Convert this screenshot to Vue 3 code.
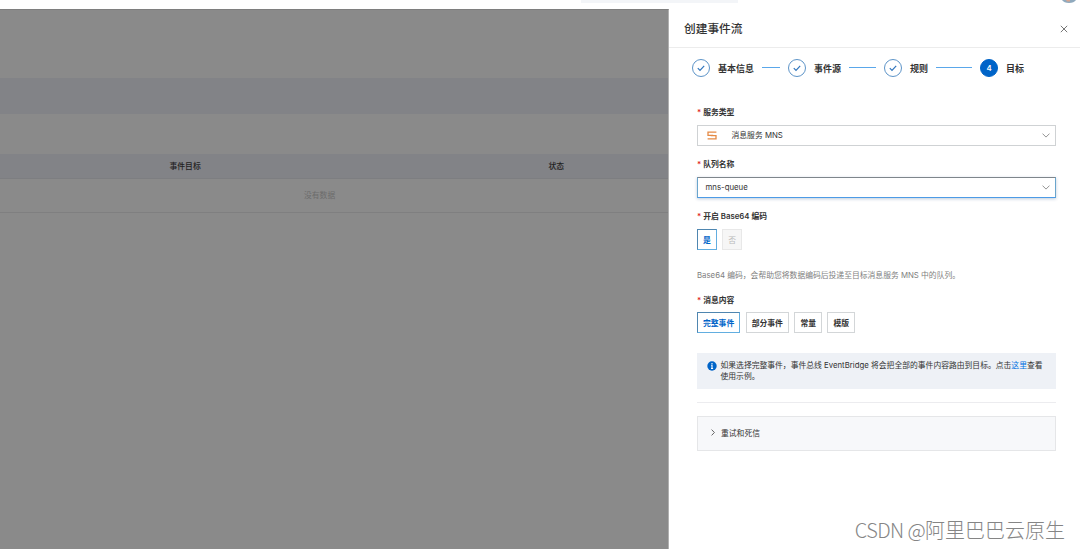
<template>
  <div class="page">
    <header class="topbar">
      <div class="search"></div>
      <svg class="avatar" viewBox="0 0 14 3">
        <path d="M0 0h14q-2 3-7 3T0 0z" fill="#8fa9bd" />
        <path d="M4 0h4v1.5H5z" fill="#d8a58f" />
      </svg>
    </header>

    <div class="content">
      <main class="list">
        <div class="notice"></div>
        <div class="row row-head">
          <span class="cell-source"></span>
          <span class="cell-target">事件目标</span>
          <span class="cell-status">状态</span>
        </div>
        <div class="row row-empty">没有数据</div>
      </main>

      <aside class="drawer">
        <div class="drawer-head">
          <h2>创建事件流</h2>
          <svg class="close" viewBox="0 0 8 8">
            <path d="M0.8 0.8l6.4 6.4M7.2 0.8l-6.4 6.4" />
          </svg>
        </div>

        <div class="steps">
          <template v-for="(step, i) in steps" :key="step.name">
            <div class="step">
              <span class="circle" :class="{ active: i === current }">
                <svg v-if="i < current" viewBox="0 0 8 8">
                  <path d="M0.8 4.1l2.2 2.3 4.2-4.5" />
                </svg>
                <template v-else>{{ i + 1 }}</template>
              </span>
              <span class="step-name">{{ step.name }}</span>
            </div>
            <i v-if="i < steps.length - 1" class="line" :style="{ width: step.line + 'px' }"></i>
          </template>
        </div>

        <form class="form" @submit.prevent>
          <label class="label">服务类型</label>
          <div class="select">
            <svg class="mns" viewBox="0 0 10 9">
              <path d="M9.4 1.1H1v3.2h5.2M.6 7.9H9V4.7H3.8" />
            </svg>
            <span class="value">消息服务 MNS</span>
            <svg class="arrow" viewBox="0 0 8 5"><path d="M.5.6L4 4.1 7.5.6" /></svg>
          </div>

          <label class="label">队列名称</label>
          <div class="select focused">
            <span class="value">mns-queue</span>
            <svg class="arrow" viewBox="0 0 8 5"><path d="M.5.6L4 4.1 7.5.6" /></svg>
          </div>

          <label class="label">开启 Base64 编码</label>
          <div class="options">
            <button type="button" class="option selected">是</button>
            <button type="button" class="option" disabled>否</button>
          </div>
          <p class="help">Base64 编码，会帮助您将数据编码后投递至目标消息服务 MNS 中的队列。</p>

          <label class="label">消息内容</label>
          <div class="options">
            <button
              v-for="type in contentTypes"
              :key="type"
              type="button"
              class="option"
              :class="{ selected: type === contentType }"
              @click="contentType = type"
            >{{ type }}</button>
          </div>

          <div class="alert">
            <svg class="info" viewBox="0 0 10 10">
              <circle cx="5" cy="5" r="4.7" fill="#0064c8" />
              <path d="M5 2v1.3M4.2 4.3H5v3M4 7.5h2.1" stroke="#fff" stroke-width="1.1" fill="none" />
            </svg>
            <p>如果选择完整事件，事件总线 EventBridge 将会把全部的事件内容路由到目标。点击<a>这里</a>查看<br />使用示例。</p>
          </div>

          <div class="divider"></div>

          <div class="collapse">
            <svg viewBox="0 0 4 7"><path d="M.6.6l2.8 2.9L.6 6.4" /></svg>
            <span>重试和死信</span>
          </div>
        </form>
      </aside>
    </div>

    <div class="watermark"><span>CSDN @</span>阿里巴巴云原生</div>
  </div>
</template>

<script setup>
import { ref } from "vue";

const steps = [
  { name: "基本信息", line: 18 },
  { name: "事件源", line: 27 },
  { name: "规则", line: 36 },
  { name: "目标" }
];
const current = ref(3);

const contentTypes = ["完整事件", "部分事件", "常量", "模版"];
const contentType = ref("完整事件");
</script>

<style>
body {
  margin: 0;
  overflow: hidden;
}
</style>

<style scoped>
* {
  box-sizing: border-box;
}

svg {
  display: block;
  flex: none;
  fill: none;
}

.page {
  position: relative;
  display: flex;
  flex-direction: column;
  width: 1080px;
  height: 549px;
  background: #fff;
  color: #333;
  font-family: Inter, "Noto Sans CJK SC", sans-serif;
  font-size: 7.8px;
}

.topbar {
  display: flex;
  justify-content: space-between;
  height: 9px;
  padding: 0 4px 0 581px;
}

.search {
  width: 157px;
  height: 3px;
  background: #f3f5f8;
}

.avatar {
  width: 14px;
  height: 3px;
}

.content {
  flex: 1;
  display: flex;
}

.list {
  width: 669px;
  padding-top: 68px;
  background: #8a8a8a;
  border-top: 1px solid #7e7e7e;
  border-right: 1px solid #b0b0b0;
}

.notice {
  height: 36px;
  margin-bottom: 40px;
  background: #828387;
}

.row {
  display: flex;
  align-items: center;
  padding-bottom: 2px;
}

.row-head {
  height: 25px;
  background: #828387;
  border-bottom: 1px solid #7d7e81;
  color: #222;
  font-weight: 500;
}

.cell-source {
  width: 169.5px;
}

.cell-target {
  width: 379px;
}

.row-empty {
  height: 34px;
  padding-left: 304px;
  border-bottom: 1px solid #7f7f80;
  color: #6c6c6c;
}

.drawer {
  flex: 1;
  background: #fff;
}

.drawer-head {
  display: flex;
  align-items: center;
  justify-content: space-between;
  height: 39px;
  padding: 0 12px 0 15px;
  border-bottom: 1px solid #ececec;
}

.drawer-head h2 {
  margin: 0;
  padding-bottom: 2px;
  font-size: 11.7px;
  font-weight: 500;
}

.close {
  width: 8px;
  height: 8px;
  margin-top: 1px;
  stroke: #666;
  stroke-width: 0.9;
}

.steps {
  display: flex;
  align-items: center;
  gap: 8px;
  height: 18px;
  margin: 11px 0 0 23px;
}

.step {
  display: flex;
  align-items: center;
  gap: 8px;
}

.circle {
  display: flex;
  align-items: center;
  justify-content: center;
  width: 18px;
  height: 18px;
  border: 1px solid #5d94c8;
  border-radius: 50%;
  color: #fff;
  font-weight: 600;
}

.circle.active {
  background: #0064c8;
  border-color: #0064c8;
}

.circle svg {
  width: 8px;
  height: 8px;
  stroke: #2f75bd;
  stroke-width: 1.2;
}

.step-name {
  font-size: 9px;
  font-weight: 600;
}

.line {
  height: 1px;
  margin-bottom: 1px;
  background: #5aa7ea;
}

.form {
  display: flex;
  flex-direction: column;
  width: 387px;
  padding: 29px 0 0 28px;
}

.label {
  height: 12px;
  margin-bottom: 7px;
  font-weight: 600;
  line-height: 12px;
}

.label::before {
  content: "*";
  margin-right: 2px;
  color: #e02020;
}

.select {
  display: flex;
  align-items: center;
  height: 21px;
  margin-bottom: 12px;
  padding: 0 5px 0 7.5px;
  border: 1px solid #cfd2d4;
}

.select.focused {
  border-color: #7f868c #6aa5cc #4d9be6 #6aa5cc;
  box-shadow: 0 1px 3px rgba(0, 60, 120, 0.25);
}

.value {
  flex: 1;
  padding-bottom: 2px;
}

.mns {
  width: 10px;
  height: 9px;
  margin: 0 14.5px 0 1.5px;
  stroke: #e58a45;
  stroke-width: 1.3;
}

.arrow {
  width: 8px;
  height: 5px;
  stroke: #888;
  stroke-width: 0.9;
}

.options {
  display: flex;
  gap: 5.5px;
}

.option {
  height: 21px;
  padding: 0 5px 1px;
  background: #fff;
  border: 1px solid #d3d6d8;
  color: #333;
  font: inherit;
  font-weight: 600;
}

.option.selected {
  border-color: #4f86b0 #62aee0 #62aee0 #4f86b0;
  color: #0064c8;
}

.option:disabled {
  background: #f6f6f6;
  border-color: #e8e8e8;
  color: #bbb;
  font-weight: 400;
}

.help {
  height: 12px;
  margin: 19px 0 13px;
  color: #808080;
  line-height: 12px;
  white-space: nowrap;
}

.help + .label {
  margin-bottom: 6px;
}

.alert {
  display: flex;
  height: 36px;
  margin-top: 20px;
  padding: 8px 10px;
  background: #eef1f6;
}

.info {
  width: 10px;
  height: 10px;
  margin-right: 3.5px;
}

.alert p {
  margin: -1px 0 0;
  line-height: 10.5px;
  white-space: nowrap;
}

.alert a {
  color: #0070e0;
}

.divider {
  height: 1px;
  margin: 13px 0;
  background: #ececef;
}

.collapse {
  display: flex;
  align-items: center;
  height: 35px;
  padding: 0 0 2px 12.5px;
  background: #f7f8fa;
  border: 1px solid #e5e6e8;
}

.collapse svg {
  width: 4px;
  height: 7px;
  margin-right: 6.5px;
  stroke: #555;
  stroke-width: 0.9;
}

/* floats over the drawer's lower corner */
.watermark {
  position: absolute;
  right: 15px;
  bottom: 7px;
  color: #858585;
  font-family: "Noto Sans CJK SC", sans-serif;
  font-size: 20px;
  font-weight: 300;
  line-height: 24px;
}

.watermark span {
  letter-spacing: -0.6px;
}
</style>
